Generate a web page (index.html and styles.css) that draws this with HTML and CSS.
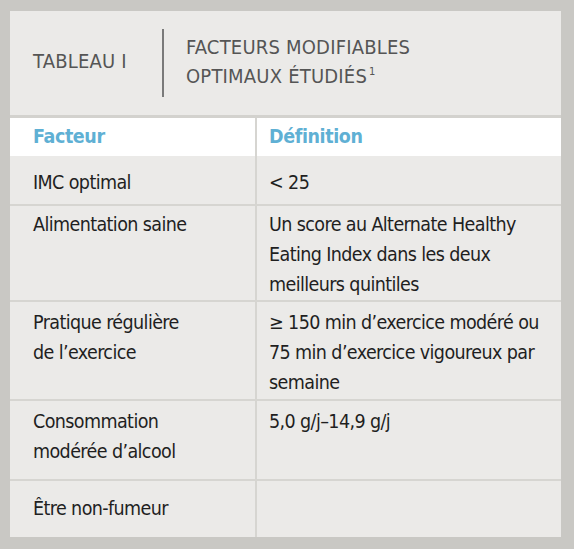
FILE: index.html
```html
<!DOCTYPE html>
<html lang="fr">
<head>
<meta charset="utf-8">
<title>Tableau I</title>
<link rel="stylesheet" href="styles.css">
</head>
<body>
<div class="card">
  <div class="head">
    <div class="label">TABLEAU I</div>
    <div class="divider"></div>
    <div class="title">FACTEURS MODIFIABLES<br>OPTIMAUX ÉTUDIÉS<sup>1</sup></div>
  </div>
  <table class="tbl">
    <thead>
      <tr class="r-head"><th class="c1">Facteur</th><th class="c2">Définition</th></tr>
    </thead>
    <tbody>
      <tr class="r1"><td class="c1">IMC optimal</td><td class="c2">&lt; 25</td></tr>
      <tr class="r2"><td class="c1">Alimentation saine</td><td class="c2">Un score au Alternate Healthy<br>Eating Index dans les deux<br>meilleurs quintiles</td></tr>
      <tr class="r3"><td class="c1">Pratique régulière<br>de l’exercice</td><td class="c2">≥ 150 min d’exercice modéré ou<br>75 min d’exercice vigoureux par<br>semaine</td></tr>
      <tr class="r4"><td class="c1">Consommation<br>modérée d’alcool</td><td class="c2">5,0 g/j–14,9 g/j</td></tr>
      <tr class="r5"><td class="c1">Être non-fumeur</td><td class="c2"></td></tr>
    </tbody>
  </table>
</div>
</body>
</html>
```

FILE: styles.css
```css
html, body {
  margin: 0;
  padding: 0;
}
body {
  background: #c9c8c4;
  width: 574px;
  height: 549px;
  overflow: hidden;
  font-family: "DejaVu Sans Condensed", "DejaVu Sans", "Liberation Sans", sans-serif;
  font-stretch: condensed;
}
.card {
  margin: 11px 13px 0 10px;
  width: 551px;
  height: 526px;
  background: #ebeae8;
  overflow: hidden;
}
.head {
  height: 104px;
  display: flex;
  align-items: center;
  border-bottom: 3px solid #d3d2ce;
}
.label {
  width: 130px;
  padding-left: 23px;
  padding-bottom: 4px;
  box-sizing: border-box;
  font-size: 20px;
  color: #555555;
  letter-spacing: 0.2px;
}
.divider {
  width: 2px;
  height: 68px;
  background: #7a7a7a;
  margin: 0 22px 0 22px;
}
.title {
  font-size: 20px;
  line-height: 29px;
  color: #555555;
  letter-spacing: 0.2px;
  padding-bottom: 2px;
}
.title sup {
  font-size: 11px;
  vertical-align: 8px;
  line-height: 0;
  margin-left: 2px;
}
.tbl {
  border-collapse: collapse;
  width: 100%;
}
.tbl th, .tbl td {
  text-align: left;
  vertical-align: top;
  padding: 0;
  font-weight: normal;
  font-size: 19.5px;
  letter-spacing: -0.6px;
  line-height: 30px;
  color: #1f1f1f;
  white-space: nowrap;
}
.tbl .c1 {
  width: 246px;
  padding-left: 23px;
  box-sizing: border-box;
  border-right: 2px solid #d6d5d1;
}
.tbl .c2 {
  padding-left: 12px;
}
.tbl tr {
  border-bottom: 2px solid #d6d5d1;
}
.tbl tr:last-child {
  border-bottom: none;
}
.r-head {
  background: #ffffff;
  height: 38px;
}
.r-head th {
  color: #5fb0d4;
  font-weight: bold;
  letter-spacing: -0.4px;
  padding-top: 4px;
}
.r1 { height: 49px; }
.r1 td { padding-top: 12px; }
.r2 { height: 96px; }
.r2 td { padding-top: 4px; }
.r3 { height: 99px; }
.r3 td { padding-top: 6px; }
.r4 { height: 80px; }
.r4 td { padding-top: 6px; }
.r5 { height: 60px; }
.r5 td { padding-top: 13px; }
```
